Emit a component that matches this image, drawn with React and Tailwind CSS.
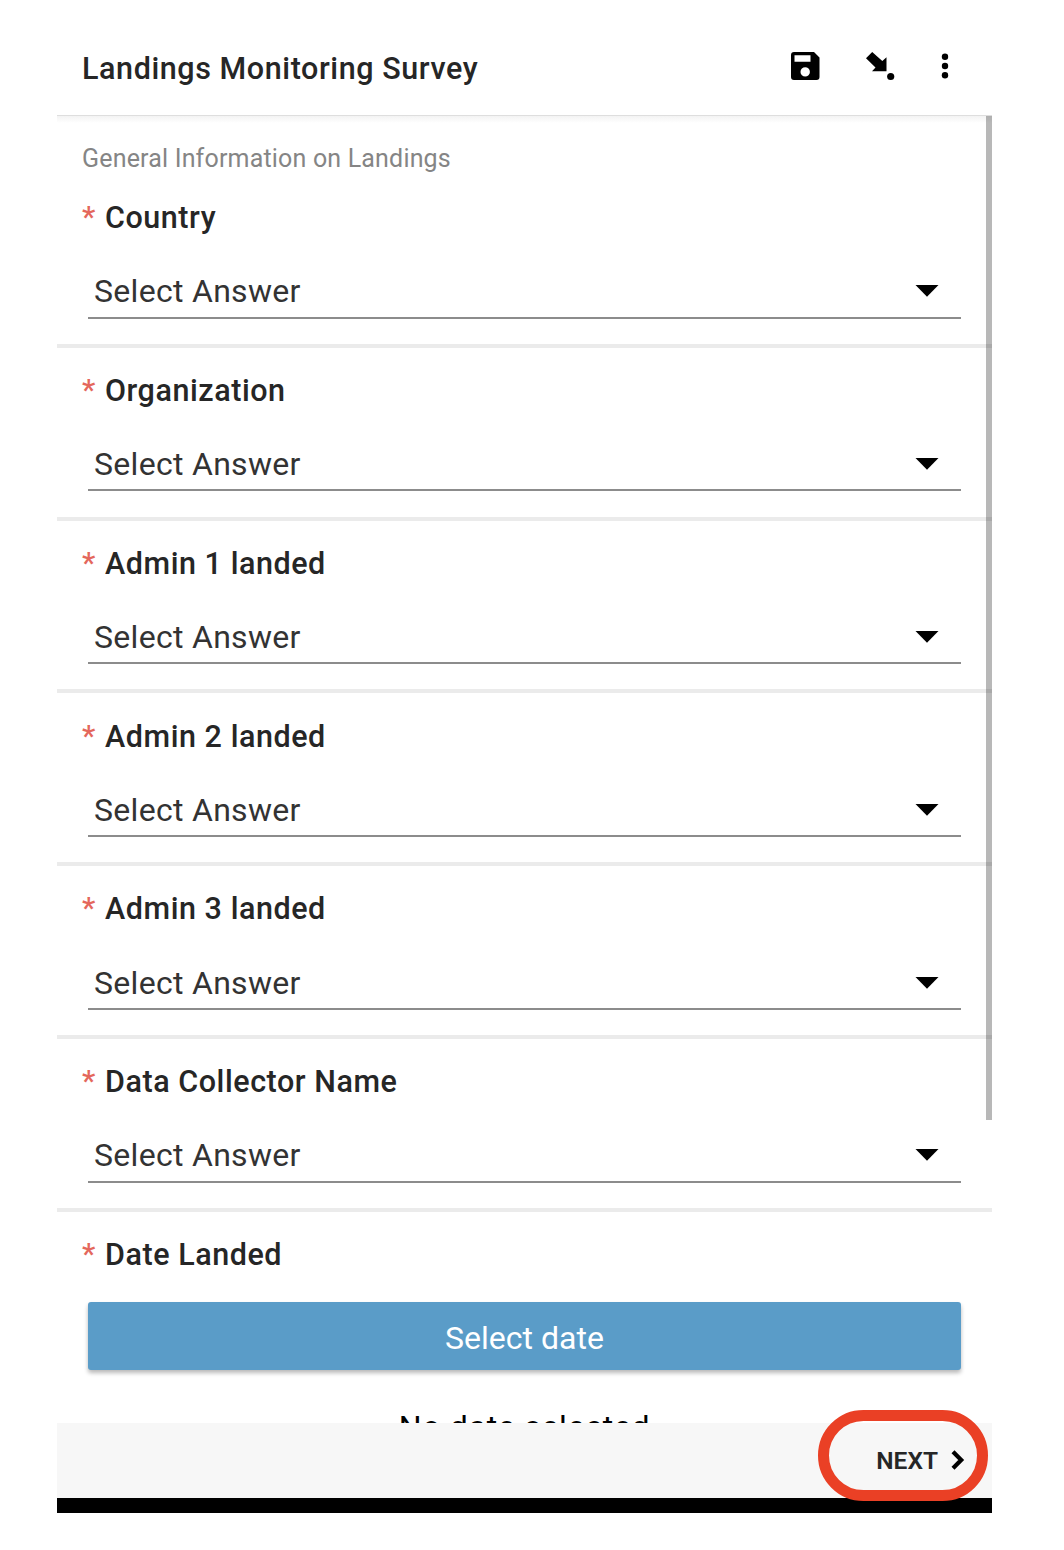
const QUESTIONS = [
  "Country",
  "Organization",
  "Admin 1 landed",
  "Admin 2 landed",
  "Admin 3 landed",
  "Data Collector Name",
];

function Label({ children }) {
  return (
    <div className="flex h-9 items-start pl-[25px] text-[30px] leading-9 whitespace-pre">
      <span className="w-[23px] font-medium text-[#e4675c]">*</span>
      <span className="mt-px text-[30.5px] font-medium tracking-[0.55px] text-[#262626]">{children}</span>
    </div>
  );
}

function SelectQuestion({ label }) {
  return (
    <section className="h-[172.8px] border-b-[4.4px] border-[#ebebeb] pt-[24.3px]">
      <Label>{label}</Label>
      <div className="mt-[36.1px] mr-[31px] ml-[31px] flex h-[47.3px] items-start justify-between border-b-2 border-[#8c8c8c] pr-[22px] pl-[6px]">
        <span className="text-[32px] leading-10 tracking-[0.3px] text-[#333]">Select Answer</span>
        <svg className="mt-[14px]" width="24" height="12" viewBox="0 0 24 12">
          <path d="M0.5 0h23L12 11.8z" fill="#000" />
        </svg>
      </div>
    </section>
  );
}

export default function App() {
  return (
    <div className="h-[1550px] w-[1064px] overflow-hidden bg-white font-['Roboto',sans-serif]">
      <div className="ml-[57px] flex h-[1513px] w-[935px] flex-col">
        <header className="flex h-[116px] shrink-0 items-start border-b border-[#dedede] pl-[25px]">
          <h1 className="mt-[51px] flex-1 text-[30.5px] leading-9 font-medium tracking-[0.58px] text-[#262626]">
            Landings Monitoring Survey
          </h1>
          <svg className="mt-[51px] mr-[46px]" width="29" height="30" viewBox="0 0 29 30">
            <path
              fillRule="evenodd"
              d="M3 1h20l5.500 5.500V26a3 3 0 0 1-3 3H3a3 3 0 0 1-3-3V4a3 3 0 0 1 3-3zM3.500 4.200v6.500h16V4.200zM14.200 16.200a4.700 4.700 0 1 0 0 9.400a4.700 4.700 0 0 0 0-9.400z"
            />
          </svg>
          <svg className="mt-[51px] mr-[46px]" width="29" height="30" viewBox="0 0 29 30">
            <path d="M6.200 1L0 7.200l9.500 9.300L6 20.300h14.500V6.200l-4.200 3.900z" />
            <circle cx="24.700" cy="25.500" r="3.600" />
          </svg>
          <svg className="mt-[51px] mr-[43px]" width="8" height="30" viewBox="0 0 8 30">
            <circle cx="4" cy="5.700" r="3.200" />
            <circle cx="4" cy="15" r="3.200" />
            <circle cx="4" cy="24.300" r="3.200" />
          </svg>
        </header>

        <main className="relative min-h-0 flex-1 overflow-hidden bg-[linear-gradient(#f3f3f3,#ffffff_7px)]">
          <div className="h-[59px] pt-[28px] pl-[25px] text-[25px] leading-[30px] tracking-[0.18px] text-[#858585]">
            General Information on Landings
          </div>
          {QUESTIONS.map((q) => (
            <SelectQuestion key={q} label={q} />
          ))}
          <section className="pt-[24.3px]">
            <Label>Date Landed</Label>
            <button className="mt-[30.2px] mr-[31px] ml-[31px] block h-[68px] w-[873px] rounded-[3px] bg-[#5a9cc8] pt-[4px] text-[32px] leading-10 text-white shadow-[0_3px_4px_rgba(0,0,0,0.28)]">
              Select date
            </button>
            <p className="mt-[37px] text-center text-[32px] leading-10 tracking-[0.7px] text-black">
              No date selected
            </p>
          </section>
          <div className="absolute top-0 right-0 h-[1004px] w-[6px] bg-black/28" />
        </main>

        <footer className="relative flex h-[75px] shrink-0 items-start justify-end bg-[#f7f7f7] pt-[23px] pr-[27px]">
          <span className="text-[24.5px] leading-[30px] font-semibold text-[#262626]">NEXT</span>
          <svg className="mt-[4px] ml-[13px]" width="14" height="20" viewBox="0 0 14 20">
            <path d="M2 1.800l8.200 8.200L2 18.200" fill="none" stroke="#000" strokeWidth="4.200" />
          </svg>
          <div className="absolute -top-[13px] right-[4px] z-10 h-[91px] w-[170px] rounded-[46px] border-[11.5px] border-[#ea4025]" />
        </footer>
        <div className="h-[15px] shrink-0 bg-black" />
      </div>
    </div>
  );
}
